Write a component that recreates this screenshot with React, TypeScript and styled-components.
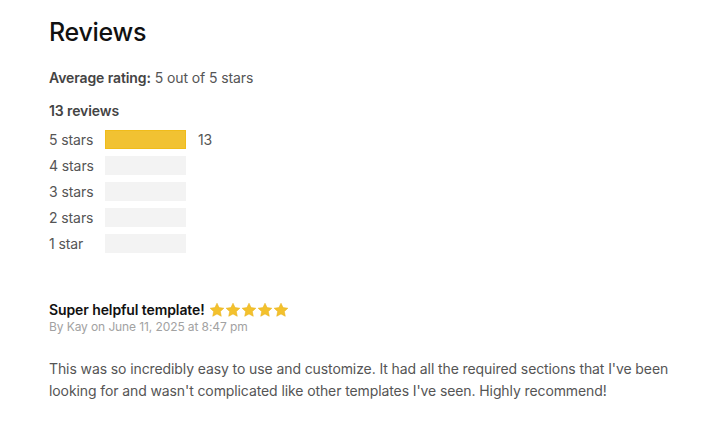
import React from "react";
import styled, { createGlobalStyle } from "styled-components";

const GlobalStyle = createGlobalStyle`
  body {
    margin: 0;
    background: #fff;
    font-family: Inter, "Liberation Sans", sans-serif;
    color: #555;
    letter-spacing: -0.1px;
  }
`;

const Page = styled.main`
  padding: 17px 49px 0;
`;

const Title = styled.h2`
  margin: 0;
  font-size: 25px;
  font-weight: 500;
  color: #111;
  line-height: 30px;
  letter-spacing: -0.3px;
`;

const Summary = styled.p`
  margin: 21px 0 0;
  font-size: 14px;
  line-height: 20px;
  color: #555;

  strong {
    font-weight: 600;
    color: #444;
  }
`;

const Count = styled.h3`
  margin: 13px 0 0;
  font-size: 14px;
  font-weight: 600;
  color: #444;
  line-height: 20px;
`;

const Histogram = styled.ul`
  list-style: none;
  margin: 9px 0 0;
  padding: 0;
  display: flex;
  flex-direction: column;
  gap: 7px;
`;

const Row = styled.li`
  display: flex;
  align-items: center;
  height: 19px;
  font-size: 14px;
  color: #555;
`;

const RowLabel = styled.span`
  width: 56px;
`;

const Track = styled.div`
  width: 81px;
  height: 19px;
  background: #f3f3f3;
`;

const Fill = styled.div`
  height: 100%;
  background: #f1c232;
  box-shadow: inset 0 0 0 1px #f0bc1a;
`;

const RowCount = styled.span`
  margin-left: 12px;
`;

const Review = styled.article`
  margin-top: 48px;
`;

const ReviewHead = styled.div`
  display: flex;
  align-items: center;
  gap: 4px;
`;

const ReviewTitle = styled.h4`
  margin: 0;
  font-size: 14px;
  font-weight: 600;
  color: #111;
  line-height: 18px;
`;

const Stars = styled.span`
  display: inline-flex;
`;

const Meta = styled.div`
  font-size: 12px;
  color: #a2a2a2;
  line-height: 16px;
`;

const Body = styled.p`
  margin: 23px 0 0;
  font-size: 14px;
  line-height: 22px;
  color: #555;
  max-width: 650px;
`;

const Star = () => (
  <svg width="16" height="16" viewBox="0 0 24 24">
    <path
      d="M12 1.8l3.1 6.6 7.2.9-5.3 5 1.4 7.1L12 17.9l-6.4 3.5 1.4-7.1-5.3-5 7.2-.9z"
      fill="#f3c12d"
      stroke="#e9b21a"
      strokeWidth="0.8"
      strokeLinejoin="round"
    />
  </svg>
);

const rows = [
  { label: "5 stars", count: 13 },
  { label: "4 stars", count: 0 },
  { label: "3 stars", count: 0 },
  { label: "2 stars", count: 0 },
  { label: "1 star", count: 0 },
];

const total = 13;

export default function App() {
  return (
    <>
      <GlobalStyle />
      <Page>
        <Title>Reviews</Title>
        <Summary>
          <strong>Average rating:</strong> 5 out of 5 stars
        </Summary>
        <Count>13 reviews</Count>
        <Histogram>
          {rows.map((r) => (
            <Row key={r.label}>
              <RowLabel>{r.label}</RowLabel>
              <Track>
                {r.count > 0 && <Fill style={{ width: `${(r.count / total) * 100}%` }} />}
              </Track>
              {r.count > 0 && <RowCount>{r.count}</RowCount>}
            </Row>
          ))}
        </Histogram>
        <Review>
          <ReviewHead>
            <ReviewTitle>Super helpful template!</ReviewTitle>
            <Stars>
              {[0, 1, 2, 3, 4].map((i) => (
                <Star key={i} />
              ))}
            </Stars>
          </ReviewHead>
          <Meta>By Kay on June 11, 2025 at 8:47 pm</Meta>
          <Body>
            This was so incredibly easy to use and customize. It had all the required sections that I've been
            looking for and wasn't complicated like other templates I've seen. Highly recommend!
          </Body>
        </Review>
      </Page>
    </>
  );
}
